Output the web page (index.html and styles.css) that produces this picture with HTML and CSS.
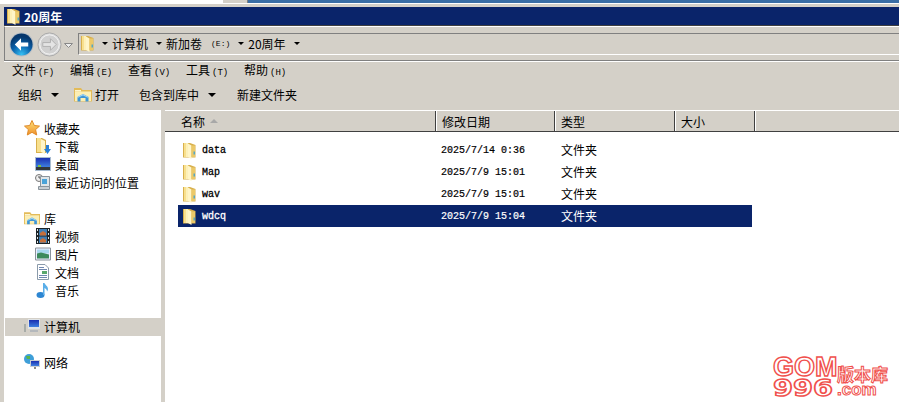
FILE: index.html
```html
<!DOCTYPE html>
<html lang="zh-CN">
<head>
    <meta charset="UTF-8">
    <title>20周年</title>
    <link rel="stylesheet" href="styles.css">
</head>
<body>
    <svg class="defs" width="0" height="0">
        <symbol id="folder" viewBox="0 0 13 17">
            <path d="M0 1h7l5.500 2v12.500H0z" fill="#d8b04c"/>
            <path d="M1 1h4v14H1z" fill="#f8e08e"/>
            <path d="M3 1h2v14H3z" fill="#fdf0b8"/>
            <path d="M5 1.500l3.500 2V17L5 15z" fill="#fff5c8"/>
            <path d="M8.500 3.500h3.500v11.500H8.500z" fill="#ecc968"/>
            <path d="M10.500 9.500H12v3h-1.500z" fill="#54a8c4"/>
        </symbol>
        <symbol id="library" viewBox="0 0 18 15">
            <path d="M0 1h7l1.500 2H18v11.500H0z" fill="#e3bb58"/>
            <path d="M1 4.500h16V14H1z" fill="#fbeeb4"/>
            <path d="M1 3h6v1.500H1z" fill="#fdf5cf"/>
            <path d="M3.500 14.500V10L9 7l5.500 3v4.500h-3V11h-5v3.500z" fill="#3f96d6"/>
            <path d="M3.500 10L9 7l5.500 3v1L9 8.500 3.500 11z" fill="#9fd4f2"/>
        </symbol>
        <linearGradient id="star-fill" x1="0" y1="0" x2="0" y2="1">
            <stop offset="0" stop-color="#fde27a"/>
            <stop offset="1" stop-color="#f0902a"/>
        </linearGradient>
        <linearGradient id="screen-fill" x1="0" y1="0" x2="0" y2="1">
            <stop offset="0" stop-color="#1a2fb0"/>
            <stop offset="1" stop-color="#3f7fe0"/>
        </linearGradient>
    </svg>

    <div class="top-strip">
        <div class="strip-light"></div>
        <div class="strip-grey"></div>
        <div class="strip-blue"></div>
    </div>

    <div class="window">
        <!-- title bar -->
        <div class="title-bar">
            <svg class="title-icon"><use href="#folder"/></svg>
            <span>20周年</span>
        </div>

        <!-- address bar -->
        <div class="nav-bar">
            <svg class="nav-btn" viewBox="0 0 26 26">
                <defs>
                    <radialGradient id="back" cx="50%" cy="95%" r="80%">
                        <stop offset="0" stop-color="#35c0f4"/>
                        <stop offset="0.55" stop-color="#0a62ac"/>
                        <stop offset="1" stop-color="#06376c"/>
                    </radialGradient>
                </defs>
                <circle cx="13" cy="13" r="12.500" fill="#b4bcc4"/>
                <circle cx="13" cy="13" r="11.500" fill="url(#back)"/>
                <path d="M6 13l6.500-6.500V11H20v4h-7.500v4.500z" fill="#fff"/>
            </svg>
            <svg class="nav-btn nav-forward" viewBox="0 0 26 26">
                <circle cx="13" cy="13" r="12" fill="#dcdcdc" stroke="#a8a8a8"/>
                <circle cx="13" cy="13" r="10" fill="#d0d0d0" stroke="#f0f0f0"/>
                <path d="M20 13l-6-6v4H6v4h8v4z" fill="#e4e4e4" stroke="#b0b0b0"/>
            </svg>
            <svg class="nav-drop" viewBox="0 0 9 5"><path d="M.5.500h8L4.500 4.500z" fill="#eee" stroke="#888"/></svg>
            <div class="address">
                <svg class="addr-icon"><use href="#folder"/></svg>
                <span class="arrow"></span>
                <span>计算机</span>
                <span class="arrow"></span>
                <span>新加卷</span><span class="addr-drive">(E:)</span>
                <span class="arrow"></span>
                <span>20周年</span>
                <span class="arrow"></span>
            </div>
        </div>

        <!-- menu -->
        <div class="menu-bar">
            <span class="menu-item">文件<small>(F)</small></span>
            <span class="menu-item">编辑<small>(E)</small></span>
            <span class="menu-item">查看<small>(V)</small></span>
            <span class="menu-item">工具<small>(T)</small></span>
            <span class="menu-item">帮助<small>(H)</small></span>
        </div>

        <!-- toolbar -->
        <div class="tool-bar">
            <span class="tool tool-org">组织<span class="arrow"></span></span>
            <span class="tool tool-open"><svg class="open-icon"><use href="#library"/></svg>打开</span>
            <span class="tool tool-lib">包含到库中<span class="arrow"></span></span>
            <span class="tool">新建文件夹</span>
        </div>

        <div class="main">
            <!-- navigation tree -->
            <div class="sidebar">
                <div class="tree-group">
                    <div class="tree-row">
                        <svg class="tree-icon" viewBox="0 0 16 16"><path d="M8 .500l2.300 5 5.200.600-3.900 3.500 1.100 5.400L8 12.300 3.300 15l1.100-5.400L.500 6.100l5.200-.600z" fill="url(#star-fill)" stroke="#e08a28"/></svg>
                        收藏夹
                    </div>
                    <div class="tree-row tree-child">
                        <svg class="tree-icon" viewBox="0 0 16 16"><path d="M1 0h6l4 2v13H1z" fill="#d8b04c"/><path d="M2 0h4v14H2z" fill="#f8e08e"/><path d="M6 1l4 2v13l-4-2z" fill="#fff5c8"/><path d="M11 7h3v4h2l-3.500 5L9 11h2z" fill="#2a80d6"/></svg>
                        下载
                    </div>
                    <div class="tree-row tree-child">
                        <svg class="tree-icon" viewBox="0 0 16 14"><path d="M0 0h16v14H0z" fill="#a8bcd0"/><path d="M1 1h14v9H1z" fill="url(#screen-fill)"/><path d="M1 10h14v3H1z" fill="#33383c"/><path d="M3 8h3v2H3z" fill="#7cc04a"/></svg>
                        桌面
                    </div>
                    <div class="tree-row tree-child">
                        <svg class="tree-icon" viewBox="0 0 16 16"><circle cx="4" cy="4" r="3.500" fill="#eee" stroke="#777"/><path d="M4 2v2h2" fill="none" stroke="#555"/><path d="M5.500 2.500h9v10h-9z" fill="#dfe5e8" stroke="#8a949c"/><path d="M7 5h5v5H7z" fill="#4aa3d8"/><path d="M3.500 12.500h11v3h-11z" fill="#c8ced2" stroke="#8a949c"/></svg>
                        最近访问的位置
                    </div>
                </div>

                <div class="tree-group">
                    <div class="tree-row">
                        <svg class="tree-icon"><use href="#library"/></svg>
                        库
                    </div>
                    <div class="tree-row tree-child">
                        <svg class="tree-icon" viewBox="0 0 16 16"><path d="M1 0h14v16H1z" fill="#1c2428"/><path d="M4 1h8v6.500H4zM4 8.500h8V15H4z" fill="#3f7fb5"/><path d="M5 5l3-2 3 2v2.500H5zM5 12l3-2 3 2v2.500H5z" fill="#c5703c"/><path d="M2 1h1v2H2zM2 5h1v2H2zM2 9h1v2H2zM2 13h1v2H2zM13 1h1v2h-1zM13 5h1v2h-1zM13 9h1v2h-1zM13 13h1v2h-1z" fill="#dce4e8"/></svg>
                        视频
                    </div>
                    <div class="tree-row tree-child">
                        <svg class="tree-icon" viewBox="0 0 16 13"><path d="M.500.500h15v12H.500z" fill="#eef" stroke="#8a949c"/><path d="M2 2h12v4H2z" fill="#a8d8ee"/><path d="M2 6l4-1 8 2v4H2z" fill="#3c8a5c"/></svg>
                        图片
                    </div>
                    <div class="tree-row tree-child">
                        <svg class="tree-icon" viewBox="0 0 14 16"><path d="M1.500.500H9l3.500 3.500v11.500h-11z" fill="#fff" stroke="#8a9aaa"/><path d="M3 3h5v1H3zM3 5h8v1H3zM3 11h8v1H3zM3 13h8v1H3z" fill="#7088b0"/><path d="M6 7h5v3H6z" fill="#5aa86c"/></svg>
                        文档
                    </div>
                    <div class="tree-row tree-child">
                        <svg class="tree-icon" viewBox="0 0 14 16"><ellipse cx="4.500" cy="13" rx="4" ry="3" fill="#2d86d2"/><path d="M7 13V1h1.500c.5 2 3.500 3 3.500 6 0 1-.5 2-1 2.500.2-2-1.500-3-2.500-3.500V13z" fill="#5aaee8"/></svg>
                        音乐
                    </div>
                </div>

                <div class="tree-group">
                    <div class="tree-row tree-current">
                        <svg class="tree-icon" viewBox="0 0 16 14"><path d="M0 5h2v8H0z" fill="#a8aca8"/><path d="M4 0h12v10H4z" fill="#dfe3e6"/><path d="M5 1h10v7H5z" fill="url(#screen-fill)"/><path d="M6 11h8v2H6z" fill="#b4b8bc"/></svg>
                        计算机
                    </div>
                </div>

                <div class="tree-group">
                    <div class="tree-row">
                        <svg class="tree-icon" viewBox="0 0 16 16"><circle cx="5" cy="5" r="5" fill="#3f9fd8"/><path d="M2 2h4v3H3zM6 6h3v3H6z" fill="#59b548"/><path d="M6 6h10v7H6z" fill="#c9ced2"/><path d="M7 7h8v5H7z" fill="url(#screen-fill)"/><path d="M10 13h2v2h-2z" fill="#888"/></svg>
                        网络
                    </div>
                </div>
            </div>

            <div class="splitter"></div>

            <!-- file list -->
            <div class="files">
                <div class="col-head">
                    <div class="col col-name">名称<span class="sort"></span></div>
                    <div class="col col-date">修改日期</div>
                    <div class="col col-type">类型</div>
                    <div class="col col-size">大小</div>
                    <div class="col-rest"></div>
                </div>
                <div class="file-list">
                    <div class="file-row">
                        <div class="cell-name"><svg class="file-icon"><use href="#folder"/></svg>data</div>
                        <div class="cell-date">2025/7/14 0:36</div>
                        <div class="cell-type">文件夹</div>
                    </div>
                    <div class="file-row">
                        <div class="cell-name"><svg class="file-icon"><use href="#folder"/></svg>Map</div>
                        <div class="cell-date">2025/7/9 15:01</div>
                        <div class="cell-type">文件夹</div>
                    </div>
                    <div class="file-row">
                        <div class="cell-name"><svg class="file-icon"><use href="#folder"/></svg>wav</div>
                        <div class="cell-date">2025/7/9 15:01</div>
                        <div class="cell-type">文件夹</div>
                    </div>
                    <div class="file-row selected">
                        <div class="cell-name"><svg class="file-icon"><use href="#folder"/></svg>wdcq</div>
                        <div class="cell-date">2025/7/9 15:04</div>
                        <div class="cell-type">文件夹</div>
                    </div>
                </div>
            </div>
        </div>
    </div>

    <!-- watermark -->
    <div class="watermark">
        <div class="wm-latin">
            <div class="wm-gom">GOM</div>
            <div class="wm-num">996</div>
        </div>
        <div class="wm-side">
            <div class="wm-cn">版本库</div>
            <div class="wm-com">.com</div>
        </div>
    </div>
</body>
</html>
```

FILE: styles.css
```css
* {
    box-sizing: border-box;
}

body {
    margin: 0;
    width: 899px;
    height: 402px;
    overflow: hidden;
    background-color: #d4d0c8;
    font-family: "Noto Sans CJK SC", "Liberation Sans", sans-serif;
    font-size: 12px;
    color: #000;
    position: relative;
}

.defs {
    display: block;
    height: 0;
}

.top-strip {
    display: flex;
    height: 3px;
}

.strip-light {
    width: 223px;
    background-color: #fff;
}

.strip-grey {
    width: 25px;
    background-color: #d4d0c8;
    border-right: 1px solid #808080;
}

.strip-blue {
    flex: 1;
    background-color: #3a6ea5;
}

.window {
    height: 399px;
    display: flex;
    flex-direction: column;
    border-top: 1px solid #fff;
    padding: 3px 0 0 4px;
}

.title-bar {
    height: 19px;
    background-color: #0a246a;
    border-bottom: 1px solid #404040;
    color: #fff;
    font-weight: bold;
    display: flex;
    align-items: center;
    gap: 4px;
    padding-left: 3px;
    flex-shrink: 0;
}

.title-icon {
    width: 13px;
    height: 17px;
}

.nav-bar {
    height: 35px;
    border-top: 1px solid #fff;
    border-bottom: 1px solid #808080;
    border-left: 1px solid #808080;
    display: flex;
    align-items: center;
    padding: 1px 0 0 4px;
    flex-shrink: 0;
}

.nav-btn {
    width: 25px;
    height: 25px;
    flex-shrink: 0;
}

.nav-forward {
    margin-left: 3px;
}

.nav-drop {
    width: 9px;
    height: 5px;
    margin-left: 2px;
    margin-top: 2px;
}

.address {
    margin-left: 5px;
    height: 22px;
    flex: 1;
    display: flex;
    align-items: center;
    border-left: 1px solid #808080;
    border-top: 1px solid #808080;
    border-bottom: 1px solid #fff;
    padding: 0 0 2px 2px;
}

.addr-icon {
    width: 13px;
    height: 17px;
}

.addr-drive {
    font-family: "Liberation Mono", monospace;
    font-size: 8px;
    margin-left: 9px;
}

.arrow {
    display: inline-block;
    width: 0;
    height: 0;
    border-left: 3px solid transparent;
    border-right: 3px solid transparent;
    border-top: 3px solid #000;
    margin: 0 4px 0 8px;
}

.menu-bar {
    height: 19px;
    border-top: 1px solid #fff;
    display: flex;
    align-items: center;
    padding: 0 0 3px 8px;
    flex-shrink: 0;
}

.menu-item {
    width: 58px;
}

.menu-item small {
    font-family: "Liberation Mono", monospace;
    font-size: 9px;
    margin-left: 2px;
}

.tool-bar {
    height: 30px;
    display: flex;
    align-items: center;
    padding: 0 0 2px 14px;
    flex-shrink: 0;
}

.tool {
    display: flex;
    align-items: center;
}

.tool .arrow {
    border-left-width: 4px;
    border-right-width: 4px;
    border-top-width: 4px;
    margin: 1px 0 0 9px;
}

.tool-org {
    margin-right: 15px;
}

.tool-open {
    gap: 3px;
    margin-right: 20px;
}

.tool-lib {
    margin-right: 21px;
}

.open-icon {
    width: 18px;
    height: 15px;
}

.main {
    flex: 1;
    display: flex;
    min-height: 0;
}

.sidebar {
    width: 157px;
    background-color: #fff;
    padding-top: 10px;
    flex-shrink: 0;
}

.tree-group {
    margin-bottom: 18px;
}

.tree-row {
    height: 18px;
    display: flex;
    align-items: center;
    padding: 0 0 2px 20px;
}

.tree-child {
    padding-left: 31px;
}

.tree-icon {
    width: 16px;
    height: 16px;
    margin-right: 4px;
    flex-shrink: 0;
}

.tree-current {
    background-color: #d4d0c8;
    margin-left: 1px;
    padding-left: 19px;
}

.splitter {
    width: 4px;
    background-color: #d4d0c8;
    flex-shrink: 0;
}

.files {
    flex: 1;
    background-color: #fff;
}

.col-head {
    height: 22px;
    display: flex;
    background-color: #d4d0c8;
    border-top: 1px solid #fff;
    border-bottom: 1px solid #404040;
}

.col {
    display: flex;
    align-items: center;
    border-right: 1px solid #404040;
    box-shadow: 1px 0 0 #fff;
    padding-left: 5px;
    margin-right: 1px;
    flex-shrink: 0;
}

.col-name {
    width: 271px;
    padding-left: 16px;
    gap: 5px;
}

.col-date {
    width: 118px;
}

.col-type {
    width: 119px;
}

.col-size {
    width: 79px;
}

.sort {
    width: 0;
    height: 0;
    border-left: 4px solid transparent;
    border-right: 4px solid transparent;
    border-bottom: 4px solid #a8a8a8;
}

.file-list {
    padding: 7px 0 0 13px;
}

.file-row {
    width: 574px;
    height: 22px;
    display: flex;
    align-items: center;
}

.file-row.selected {
    background-color: #0a246a;
    color: #fff;
}

.cell-name {
    width: 263px;
    display: flex;
    align-items: center;
    font-family: "Liberation Mono", monospace;
    font-size: 10px;
    -webkit-text-stroke: 0.3px currentColor;
    padding-left: 5px;
}

.file-icon {
    width: 13px;
    height: 17px;
    margin-right: 6px;
}

.cell-date {
    width: 120px;
    font-family: "Liberation Mono", monospace;
    font-size: 10px;
    -webkit-text-stroke: 0.2px currentColor;
}

.cell-type {
    flex: 1;
    padding-bottom: 2px;
}

.watermark {
    position: absolute;
    right: 10px;
    bottom: 5px;
    display: flex;
    color: #fff;
    -webkit-text-stroke: 1.4px #f0504c;
    font-weight: bold;
}

.wm-latin {
    width: 62px;
    font-family: "Liberation Sans", sans-serif;
}

.wm-gom {
    font-size: 27px;
    line-height: 21px;
    height: 22px;
}

.wm-num {
    font-family: "DejaVu Sans", sans-serif;
    font-size: 23px;
    line-height: 18px;
    transform: scaleX(1.25);
    transform-origin: left center;
}

.wm-side {
    margin-left: 2px;
    padding-top: 8px;
}

.wm-cn {
    font-size: 17px;
    line-height: 18px;
    width: 52px;
    -webkit-text-stroke-width: 1px;
}

.wm-com {
    font-family: "Liberation Sans", sans-serif;
    font-size: 17px;
    line-height: 13px;
    -webkit-text-stroke-width: 1px;
}
```
